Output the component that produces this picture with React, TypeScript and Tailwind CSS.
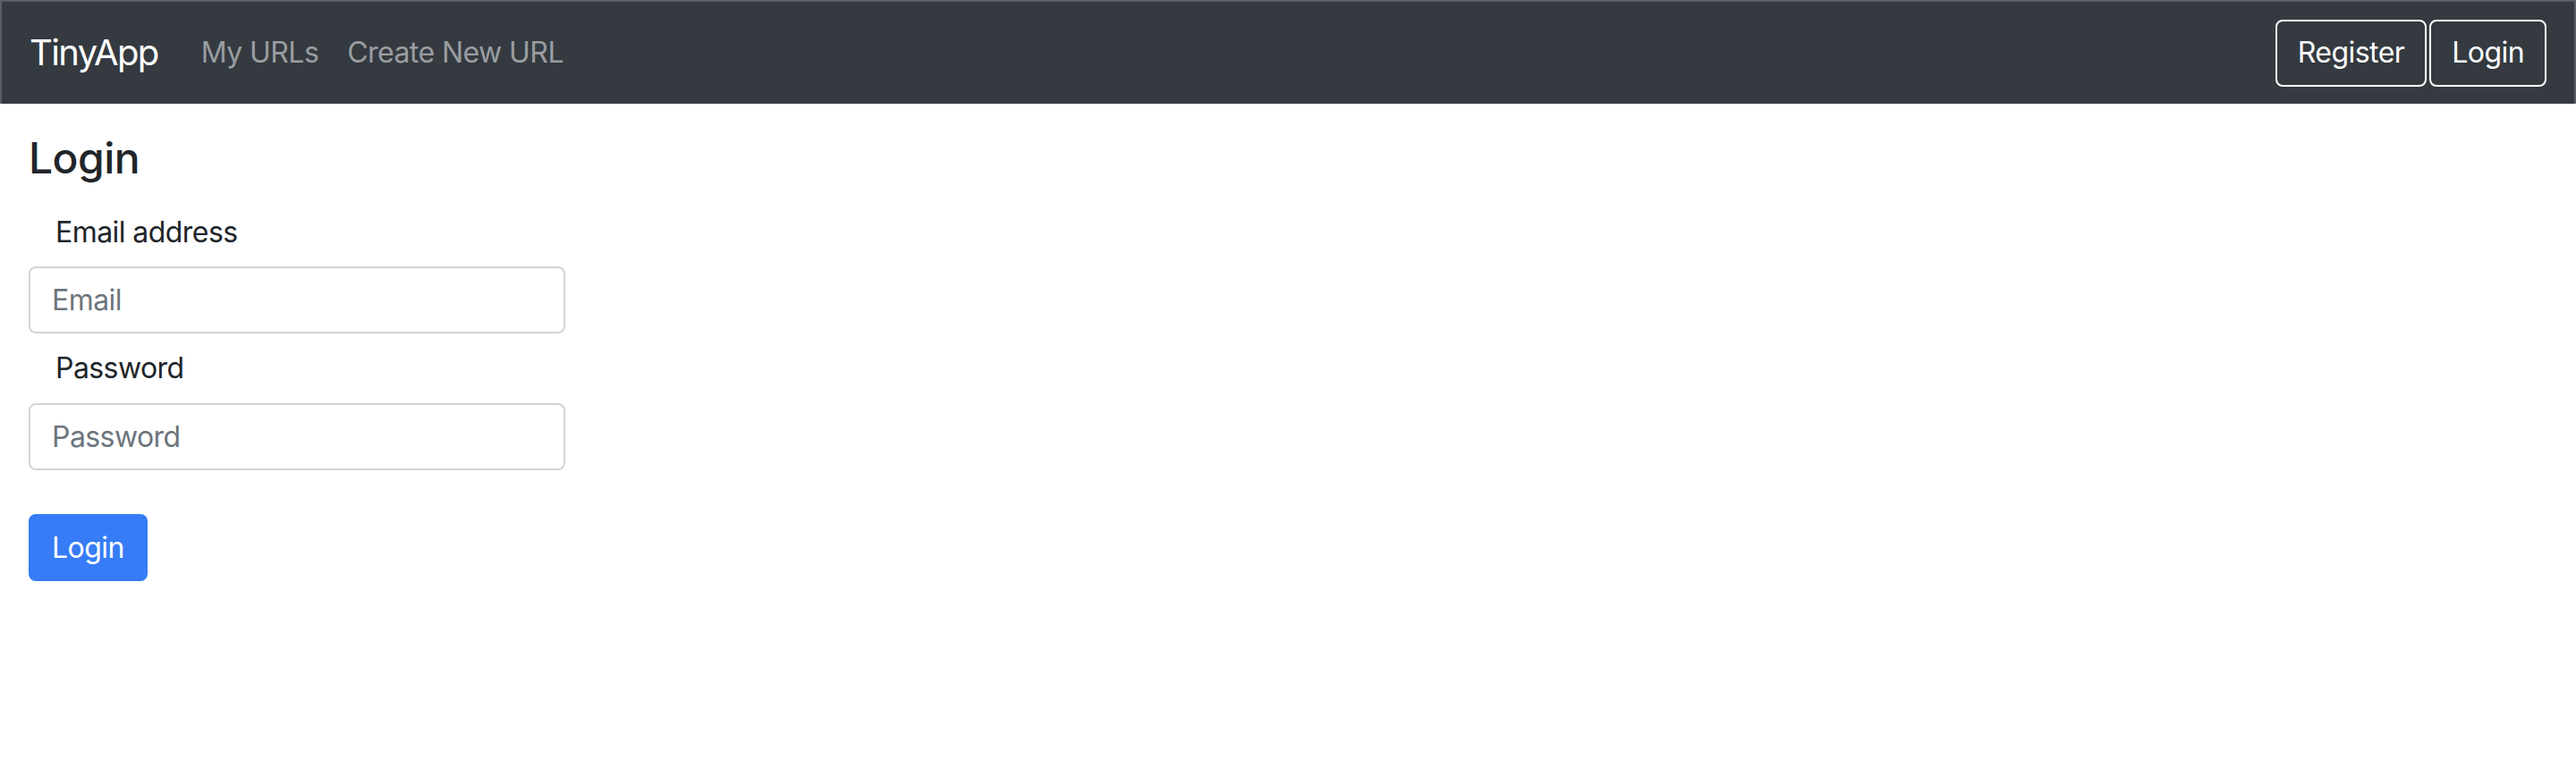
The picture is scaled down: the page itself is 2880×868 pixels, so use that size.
import React from 'react';

export default function App() {
  return (
    <div
      className="min-h-screen bg-white tracking-[-0.035em] text-[#212529]"
      style={{ fontFamily: 'Inter, "Liberation Sans", sans-serif' }}
    >
      {/* Navbar */}
      <nav className="flex h-[116px] items-center justify-between border-x-2 border-t-2 border-[#5b5f64] bg-[#343a40] pl-[31px] pr-[31px]">
        <div className="flex items-center">
          <a href="#" className="mr-[32px] text-[40px] leading-[60px] tracking-[-0.04em] text-white">
            TinyApp
          </a>
          <a href="#" className="px-[16px] text-[32px] leading-[48px] text-[#9a9da0]">
            My URLs
          </a>
          <a href="#" className="px-[16px] text-[32px] leading-[48px] text-[#9a9da0]">
            Create New URL
          </a>
        </div>
        <div className="flex items-center gap-[3px]">
          <button className="h-[75px] rounded-[8px] border-2 border-white px-[23px] text-[32px] text-white">
            Register
          </button>
          <button className="h-[75px] rounded-[8px] border-2 border-white px-[23px] text-[32px] text-white">
            Login
          </button>
        </div>
      </nav>

      {/* Login form */}
      <div className="px-[32px] pt-[32px]">
        <h3 className="text-[48px] font-medium leading-[58px]">Login</h3>
        <form className="mt-[30px]">
          <label className="block pl-[30px] text-[32px] leading-[48px]">Email address</label>
          <input
            type="email"
            placeholder="Email"
            className="mt-[14px] block h-[75px] w-[600px] rounded-[8px] border-2 border-[#ced4da] px-[24px] text-[32px] placeholder:text-[#6c757d]"
          />
          <label className="mt-[15px] block pl-[30px] text-[32px] leading-[48px]">Password</label>
          <input
            type="password"
            placeholder="Password"
            className="mt-[15px] block h-[75px] w-[600px] rounded-[8px] border-2 border-[#ced4da] px-[24px] text-[32px] placeholder:text-[#6c757d]"
          />
          <button
            type="button"
            className="mt-[49px] h-[75px] rounded-[8px] bg-[#377cf6] px-[26px] text-[32px] text-white"
          >
            Login
          </button>
        </form>
      </div>
    </div>
  );
}
